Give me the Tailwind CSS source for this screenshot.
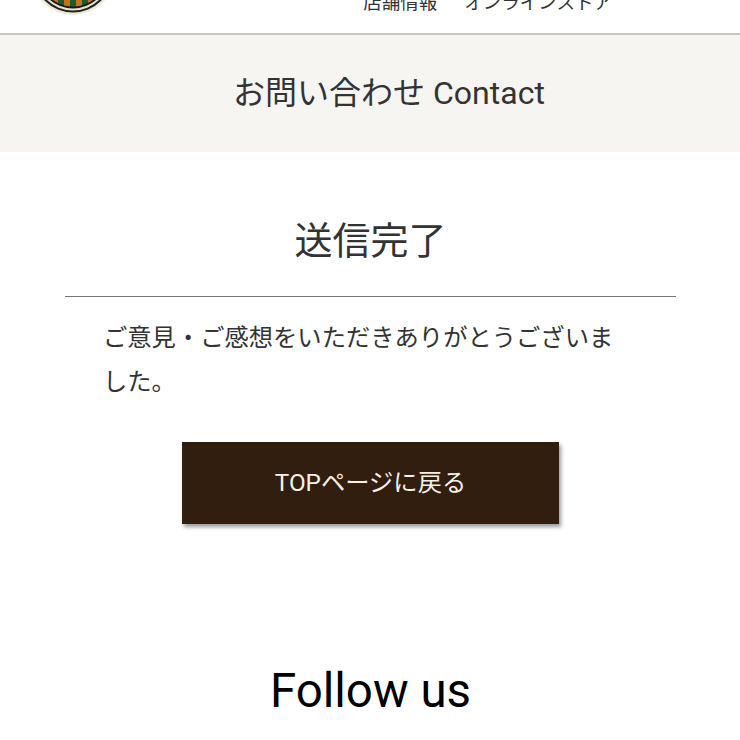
<!DOCTYPE html>
<html lang="ja">
<head>
    <meta charset="UTF-8">
    <title>お問い合わせ Contact</title>
    <script src="https://cdn.jsdelivr.net/npm/@tailwindcss/browser@4"></script>
</head>
<body class="bg-white h-[740px] overflow-hidden font-['Roboto','Noto_Sans_CJK_JP',sans-serif]">
    <header class="h-[35px] overflow-hidden bg-white border-b-2 border-[#c8c6c2] flex justify-between">
        <svg class="ml-[31px] w-[84px] h-[16px] shrink-0" viewBox="0 0 84 16" fill="none">
            <defs>
                <clipPath id="logo-inner"><circle cx="42" cy="-27" r="33.5"/></clipPath>
            </defs>
            <circle cx="42" cy="-27" r="42" fill="#ece9d8"/>
            <circle cx="42" cy="-27" r="39.5" fill="#222"/>
            <circle cx="42" cy="-27" r="37.5" fill="#e6e3cf"/>
            <circle cx="42" cy="-27" r="35.5" fill="#1b1b1b"/>
            <g clip-path="url(#logo-inner)">
                <rect x="8" y="-2" width="68" height="12" fill="#1e5a30"/>
                <path d="M24 -2v12M36 -2v12M48 -2v12M60 -2v12" stroke="#c8701c" stroke-width="6"/>
            </g>
        </svg>
        <nav class="flex gap-[27px] mr-[128px] mt-[-8px] h-[22px] text-[18.5px] leading-[22px] text-[#333]">
            <a>店舗情報</a>
            <a>オンラインストア</a>
        </nav>
    </header>
    <div class="h-[117px] bg-[#f6f5f1] flex items-center justify-center pl-[38px] pb-[2px] text-[32px] text-[#333]">
        <h1>お問い合わせ Contact</h1>
    </div>
    <main class="pl-[65px] pr-[64px]">
        <h2 class="text-center text-[38px] leading-[56px] text-[#333] pt-[61px] pb-[27px] border-b border-[#777]">送信完了</h2>
        <p class="pl-[38px] pr-[50px] pt-[19px] text-[24.3px] leading-[44px] text-[#333]">ご意見・ご感想をいただきありがとうございました。</p>
        <a class="block mt-[38px] mx-auto w-[377px] h-[82px] bg-[#321e0e] text-[#f5f1e8] text-[24.3px] flex items-center justify-center shadow-[2px_3px_4px_rgba(0,0,0,0.4)]">TOPページに戻る</a>
        <h2 class="mt-[137px] text-center text-[47.5px] leading-[60px] text-black">Follow us</h2>
    </main>
</body>
</html>
